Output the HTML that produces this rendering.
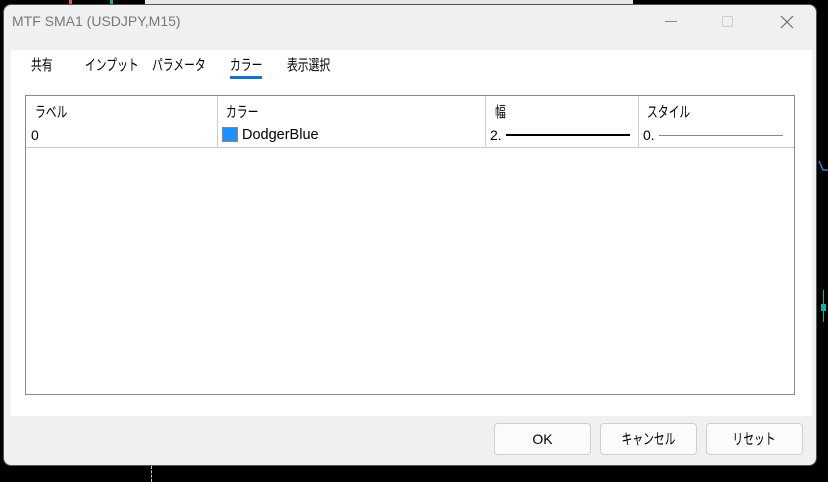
<!DOCTYPE html>
<html><head><meta charset="utf-8"><style>
*{margin:0;padding:0;box-sizing:border-box}
body{width:828px;height:482px;background:#000;position:relative;overflow:hidden;font-family:"Liberation Sans","Noto Sans CJK JP",sans-serif;font-size:14px;color:#000}
.abs{position:absolute}
.dlg{left:3px;top:4px;width:814px;height:462px;background:#f0f0f0;border-radius:8px;border:1px solid #555}
.btn{position:absolute;top:423px;width:97px;height:32px;background:#fbfbfb;border:1px solid #d0d0d0;border-radius:4px;text-align:center;line-height:30px;font-size:14px}
.t{position:absolute;font-size:14px;white-space:nowrap}
.jp{display:inline-block;transform:scaleX(.72);transform-origin:left center;font-size:15px}
.btn .jp{transform-origin:center}
</style></head><body>
<div class="abs" style="left:145px;top:0;width:488px;height:4px;background:#e8e8e8"></div>
<div class="abs" style="left:69px;top:0;width:3px;height:4px;background:#d55"></div>
<div class="abs" style="left:110px;top:0;width:3px;height:4px;background:#2a9"></div>
<div class="abs" style="left:151px;top:466px;width:1px;height:16px;border-left:1px dashed #ccc"></div>
<div class="abs" style="left:817px;top:160px;width:11px;height:30px"><svg width="11" height="30"><path d="M2 1 L6 10 L11 10" stroke="#3a7fd5" stroke-width="1.5" fill="none"/></svg></div>
<div class="abs" style="left:823px;top:290px;width:1px;height:32px;background:#2a9"></div>
<div class="abs" style="left:821px;top:304px;width:5px;height:7px;background:#2a9"></div>
<div class="abs dlg"></div>
<div class="t" style="left:12px;top:13px;color:#777;font-size:14px">MTF SMA1 (USDJPY,M15)</div>
<div class="abs" style="left:665px;top:21px;width:12px;height:1px;background:#888"></div>
<div class="abs" style="left:722px;top:16px;width:11px;height:11px;border:1px solid #ccc;border-radius:2px"></div>
<svg class="abs" style="left:780px;top:15px" width="14" height="14"><path d="M1 1L13 13M13 1L1 13" stroke="#666" stroke-width="1.1"/></svg>
<div class="abs" style="left:11px;top:50px;width:801px;height:366px;background:#fff"></div>
<div class="t" style="left:31px;top:54px"><span class="jp">共有</span></div>
<div class="t" style="left:85px;top:54px"><span class="jp">インプット</span></div>
<div class="t" style="left:152px;top:54px"><span class="jp">パラメータ</span></div>
<div class="t" style="left:230px;top:54px"><span class="jp">カラー</span></div>
<div class="abs" style="left:230px;top:76px;width:32px;height:3px;background:#1a73c0"></div>
<div class="t" style="left:287px;top:54px"><span class="jp">表示選択</span></div>
<div class="abs" style="left:25px;top:95px;width:770px;height:300px;border:1px solid #8a8a8a"></div>
<div class="abs" style="left:26px;top:147px;width:768px;height:1px;background:#ccc"></div>
<div class="abs" style="left:217px;top:96px;width:1px;height:51px;background:#ccc"></div>
<div class="abs" style="left:485px;top:96px;width:1px;height:51px;background:#ccc"></div>
<div class="abs" style="left:638px;top:96px;width:1px;height:51px;background:#ccc"></div>
<div class="t" style="left:35px;top:101px"><span class="jp">ラベル</span></div>
<div class="t" style="left:226px;top:101px"><span class="jp">カラー</span></div>
<div class="t" style="left:495px;top:101px"><span class="jp">幅</span></div>
<div class="t" style="left:647px;top:101px"><span class="jp">スタイル</span></div>
<div class="t" style="left:31px;top:127px">0</div>
<div class="abs" style="left:222px;top:127px;width:16px;height:15px;background:#1e90ff;border:1px solid #888"></div>
<div class="t" style="left:242px;top:127px;font-size:14.5px">DodgerBlue</div>
<div class="t" style="left:490px;top:127px">2.</div>
<div class="abs" style="left:506px;top:134px;width:124px;height:2px;background:#000"></div>
<div class="t" style="left:643px;top:127px">0.</div>
<div class="abs" style="left:659px;top:135px;width:124px;height:1px;background:#888"></div>
<div class="btn" style="left:494px">OK</div>
<div class="btn" style="left:600px"><span class="jp">キャンセル</span></div>
<div class="btn" style="left:706px"><span class="jp">リセット</span></div>
</body></html>
